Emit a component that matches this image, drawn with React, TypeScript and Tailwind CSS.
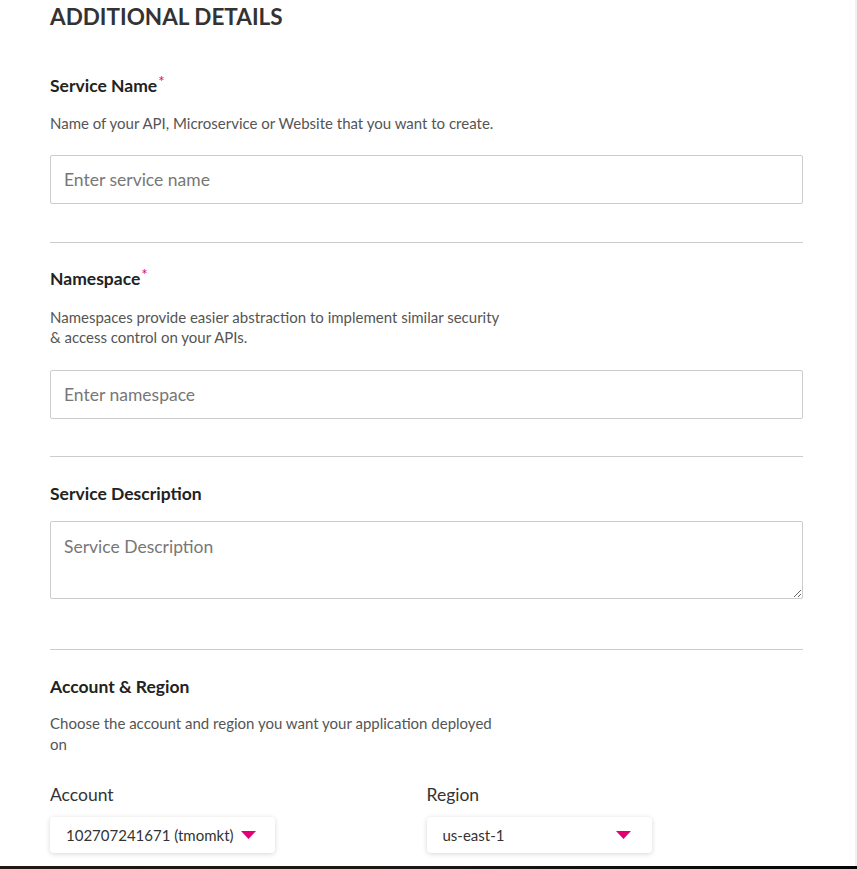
import React from 'react'

const font = { fontFamily: 'Lato, "Open Sans", sans-serif' }

const Caret = () => (
  <svg width="15" height="8" viewBox="0 0 15 8" className="shrink-0">
    <path d="M0 0 L15 0 L7.5 8 Z" fill="#e20074" />
  </svg>
)

const Label = ({ text, required }: { text: string; required?: boolean }) => (
  <h3 className="text-[17.5px] leading-[24px] font-bold text-[#222]">
    {text}
    {required && <sup className="text-[#e20074] text-[15px] font-normal top-[-5px] ml-[1px]">*</sup>}
  </h3>
)

const Divider = ({ className }: { className: string }) => (
  <hr className={`border-0 border-t border-[#cccccc] ${className}`} />
)

const App: React.FC = () => {
  return (
    <div className="h-[869px] flex flex-col bg-white" style={font}>
      <div className="flex-1 overflow-hidden border-r-2 border-[#f0f0f0]">
        <div className="pl-[50px] w-[803px] pt-[3px]">
          <h1 className="text-[22.5px] leading-[28px] font-bold text-[#333]">ADDITIONAL DETAILS</h1>

          {/* Service name */}
          <div className="mt-[43px]">
            <Label text="Service Name" required />
            <p className="mt-[15px] text-[15px] leading-[20px] text-[#555]">
              Name of your API, Microservice or Website that you want to create.
            </p>
            <input
              type="text"
              placeholder="Enter service name"
              className="mt-[22px] w-full h-[49px] border border-[#cccccc] rounded-[2px] px-[13px] text-[17.5px] text-[#333] placeholder:text-[#777] outline-none"
            />
          </div>

          <Divider className="mt-[38px]" />

          {/* Namespace */}
          <div className="mt-[24px]">
            <Label text="Namespace" required />
            <p className="mt-[16px] text-[15px] leading-[20px] text-[#555] max-w-[460px]">
              Namespaces provide easier abstraction to implement similar security &amp; access control on your APIs.
            </p>
            <input
              type="text"
              placeholder="Enter namespace"
              className="mt-[23px] w-full h-[49px] border border-[#cccccc] rounded-[2px] px-[13px] text-[17.5px] text-[#333] placeholder:text-[#777] outline-none"
            />
          </div>

          <Divider className="mt-[37px]" />

          {/* Description */}
          <div className="mt-[25px]">
            <Label text="Service Description" />
            <textarea
              placeholder="Service Description"
              className="block mt-[15px] w-full h-[78px] border border-[#cccccc] rounded-[2px] px-[13px] py-[14px] text-[17.5px] leading-[22px] text-[#333] placeholder:text-[#777] outline-none"
            />
          </div>

          <Divider className="mt-[50px]" />

          {/* Account & region */}
          <div className="mt-[25px]">
            <Label text="Account & Region" />
            <p className="mt-[14px] text-[15px] leading-[21px] text-[#555] max-w-[460px]">
              Choose the account and region you want your application deployed on
            </p>
            <div className="mt-[28px] grid grid-cols-2">
              <div>
                <div className="text-[17.5px] leading-[24px] text-[#333]">Account</div>
                <div className="mt-[10px] inline-flex items-center justify-between gap-[7px] min-w-[225px] h-[36px] pl-[16px] pr-[19px] rounded-[4px] bg-white shadow-[0_1px_5px_rgba(0,0,0,0.16)]">
                  <span className="text-[15px] text-[#333]">102707241671 (tmomkt)</span>
                  <Caret />
                </div>
              </div>
              <div>
                <div className="text-[17.5px] leading-[24px] text-[#333]">Region</div>
                <div className="mt-[10px] inline-flex items-center justify-between gap-[7px] min-w-[225px] h-[36px] pl-[16px] pr-[21px] rounded-[4px] bg-white shadow-[0_1px_5px_rgba(0,0,0,0.16)]">
                  <span className="text-[15px] text-[#333]">us-east-1</span>
                  <Caret />
                </div>
              </div>
            </div>
          </div>
        </div>
      </div>
      <div className="h-[3px] bg-gradient-to-r from-[#22180f] via-[#1c1712] to-[#050505]" />
    </div>
  )
}

export default App
